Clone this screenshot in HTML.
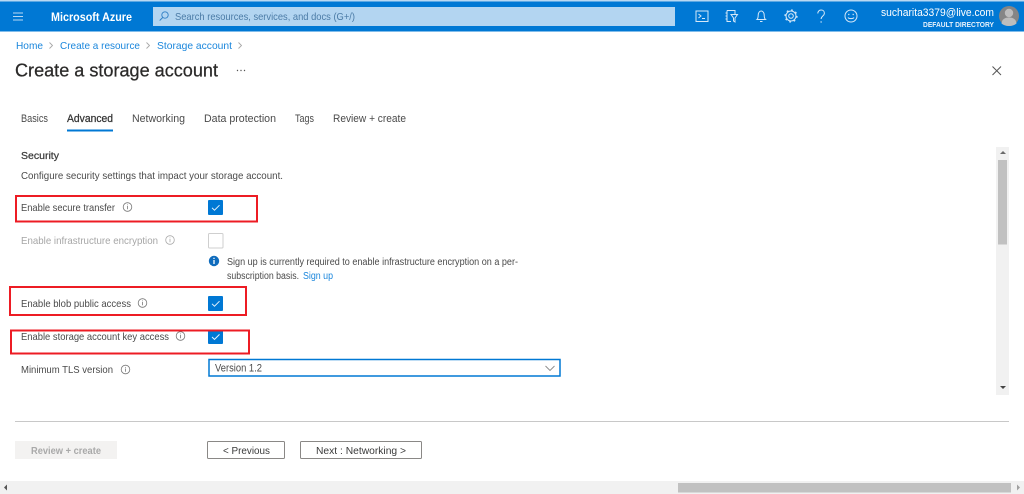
<!DOCTYPE html>
<html lang="en">
<head>
<meta charset="utf-8">
<title>Create a storage account - Microsoft Azure</title>
<style>
html,body{margin:0;padding:0;width:1024px;height:494px;overflow:hidden;background:#fff}
svg{display:block;position:absolute;left:0;top:0;filter:blur(.35px)}
text{font-family:"Liberation Sans",sans-serif;font-size:10.300px;fill:#4a4a4a}
.l{fill:#1a86dc}
.d{fill:#a6a6a6}
.info{fill:none;stroke:#777;stroke-width:.8}
.red{fill:none;stroke:#ed1c24;stroke-width:2}
.ic{fill:none;stroke:#d5e8f8;stroke-width:1}
.chev{fill:none;stroke:#a8a8a8;stroke-width:.9}
</style>
</head>
<body>
<svg width="1024" height="494" viewBox="0 0 1024 494" xmlns="http://www.w3.org/2000/svg">
<rect width="1024" height="494" fill="#fff"/>

<!-- Top bar -->
<rect x="0" y="0" width="1024" height="1.500" fill="#b9d8f2"/>
<rect x="0" y="1.500" width="1024" height="30" fill="#0078d4"/>
<path d="M13 13h10M13 16.500h10M13 20h10" stroke="#b8d8f3" stroke-width="1" fill="none"/>
<text x="51" y="21" textLength="81" lengthAdjust="spacingAndGlyphs" font-weight="bold" style="font-size:12px;fill:#fff">Microsoft Azure</text>
<rect x="153" y="7" width="522" height="19" fill="#b3d5f1"/>
<circle cx="165" cy="15" r="3.200" fill="none" stroke="#2f7fc4" stroke-width=".9"/>
<path d="M162.700 17.500l-3 3" stroke="#2f7fc4" stroke-width=".9"/>
<text x="175" y="20" textLength="180" lengthAdjust="spacingAndGlyphs" style="fill:#4b7ba6;font-size:10.500px">Search resources, services, and docs (G+/)</text>

<!-- Top bar icons -->
<rect x="696" y="11" width="12" height="10.500" class="ic"/>
<path d="M698.500 14l2.500 2-2.500 2M702 18.500h3" class="ic" stroke-width=".9"/>
<path d="M727 10.500h8v3.500M727 10.500v11h4M725.500 13h1.500M725.500 16h1.500M725.500 19h1.500" class="ic"/>
<path d="M731 14.500h6.500l-2.500 3.500v4l-1.500-1v-3z" class="ic"/>
<path d="M757 19.500c1.200-1 1.200-2.500 1.200-4.500 0-2 1.200-4 3-4s3 2 3 4c0 2 0 3.500 1.300 4.500zM760 21.500h2.500" class="ic"/>
<circle cx="791" cy="16" r="2.300" class="ic"/>
<circle cx="791" cy="16" r="5" class="ic"/>
<circle cx="791" cy="16" r="6" fill="none" stroke="#d5e8f8" stroke-width="1.200" stroke-dasharray="1.800 2.900"/>
<path d="M817.800 13.500c0-2 1.400-3.500 3.300-3.500s3.300 1.300 3.300 3.200c0 2.800-3.300 2.800-3.300 5.800" class="ic"/>
<circle cx="821.100" cy="22" r=".7" fill="#d5e8f8"/>
<circle cx="851" cy="16" r="6" class="ic"/>
<circle cx="848.800" cy="14.500" r=".7" fill="#d5e8f8"/>
<circle cx="853.200" cy="14.500" r=".7" fill="#d5e8f8"/>
<path d="M848 17.500c.8 1.500 5.200 1.500 6 0" class="ic" stroke-width=".9"/>

<text x="881" y="16" textLength="113" lengthAdjust="spacingAndGlyphs" style="fill:#fff;font-size:11px">sucharita3379@live.com</text>
<text x="923" y="27" textLength="71" lengthAdjust="spacingAndGlyphs" font-weight="bold" style="fill:#e6f1fb;font-size:7.500px">DEFAULT DIRECTORY</text>
<circle cx="1009" cy="16" r="10" fill="#858585"/>
<circle cx="1009" cy="13" r="4.200" fill="#bdbdbd"/>
<path d="M1001.500 23.500c.5-4.500 3.500-6 7.500-6s7 1.500 7.500 6c-2 1.800-4.500 2.500-7.500 2.500s-5.500-.7-7.500-2.500z" fill="#bdbdbd"/>

<!-- Breadcrumb -->
<text class="l" x="16" y="49" textLength="27" lengthAdjust="spacingAndGlyphs">Home</text>
<path d="M49.500 42.500l3 3-3 3" class="chev"/>
<text class="l" x="60" y="49" textLength="80" lengthAdjust="spacingAndGlyphs">Create a resource</text>
<path d="M146.500 42.500l3 3-3 3" class="chev"/>
<text class="l" x="157" y="49" textLength="75" lengthAdjust="spacingAndGlyphs">Storage account</text>
<path d="M238.500 42.500l3 3-3 3" class="chev"/>

<!-- Title -->
<text x="15" y="76.500" textLength="203" lengthAdjust="spacingAndGlyphs" style="font-size:18.500px;fill:#2b2a29;stroke:#2b2a29;stroke-width:.25">Create a storage account</text>
<circle cx="237.500" cy="70.500" r=".7" fill="#555"/>
<circle cx="241" cy="70.500" r=".7" fill="#555"/>
<circle cx="244.500" cy="70.500" r=".7" fill="#555"/>
<path d="M992.500 66.500l8.500 8.500M1001 66.500l-8.500 8.500" stroke="#555" stroke-width="1" fill="none"/>

<!-- Tabs -->
<text x="21" y="122" textLength="27" lengthAdjust="spacingAndGlyphs" style="font-size:11px">Basics</text>
<text x="67" y="122" textLength="46" lengthAdjust="spacingAndGlyphs" style="font-size:11px;fill:#333;stroke:#333;stroke-width:.25">Advanced</text>
<text x="132" y="122" textLength="53" lengthAdjust="spacingAndGlyphs" style="font-size:11px">Networking</text>
<text x="204" y="122" textLength="72" lengthAdjust="spacingAndGlyphs" style="font-size:11px">Data protection</text>
<text x="295" y="122" textLength="19" lengthAdjust="spacingAndGlyphs" style="font-size:11px">Tags</text>
<text x="333" y="122" textLength="73" lengthAdjust="spacingAndGlyphs" style="font-size:11px">Review + create</text>
<rect x="67" y="129.500" width="46" height="2" fill="#0078d4"/>

<!-- Security -->
<text x="21" y="159" textLength="38" lengthAdjust="spacingAndGlyphs" style="fill:#3c3c3c;stroke:#3c3c3c;stroke-width:.25">Security</text>
<text x="21" y="179" textLength="262" lengthAdjust="spacingAndGlyphs">Configure security settings that impact your storage account.</text>

<text x="21" y="211" textLength="94" lengthAdjust="spacingAndGlyphs">Enable secure transfer</text>
<g class="info"><circle cx="127.500" cy="207" r="4.300"/><path d="M127.500 206v3.200M127.500 204.500v.8"/></g>
<rect x="208" y="200" width="15" height="15" rx="1" fill="#0078d4"/>
<path d="M212 207.800l2.500 2.400 5-5" fill="none" stroke="#e8f3fc" stroke-width="1"/>

<text class="d" x="21" y="244" textLength="137" lengthAdjust="spacingAndGlyphs">Enable infrastructure encryption</text>
<g class="info" style="stroke:#aaa"><circle cx="170" cy="240" r="4.300"/><path d="M170 239v3.200M170 237.500v.8"/></g>
<rect x="208.500" y="233.500" width="14.500" height="14.500" rx="1" fill="#fff" stroke="#cfcfcf"/>

<circle cx="214" cy="261" r="5.200" fill="#0f6cbd"/>
<path d="M214 260v4M214 257.800v1.200" stroke="#fff" stroke-width="1.300" fill="none"/>
<text x="227" y="265" textLength="291" lengthAdjust="spacingAndGlyphs" style="font-size:10px">Sign up is currently required to enable infrastructure encryption on a per-</text>
<text x="227" y="279" textLength="72" lengthAdjust="spacingAndGlyphs" style="font-size:10px">subscription basis.</text>
<text class="l" x="303" y="279" textLength="30" lengthAdjust="spacingAndGlyphs" style="font-size:10px">Sign up</text>

<text x="21" y="307" textLength="110" lengthAdjust="spacingAndGlyphs">Enable blob public access</text>
<g class="info"><circle cx="142.500" cy="303" r="4.300"/><path d="M142.500 302v3.200M142.500 300.500v.8"/></g>
<rect x="208" y="296" width="15" height="15" rx="1" fill="#0078d4"/>
<path d="M212 303.800l2.500 2.400 5-5" fill="none" stroke="#e8f3fc" stroke-width="1"/>

<text x="21" y="340" textLength="148" lengthAdjust="spacingAndGlyphs">Enable storage account key access</text>
<g class="info"><circle cx="180.500" cy="336" r="4.300"/><path d="M180.500 335v3.200M180.500 333.500v.8"/></g>
<rect x="208" y="329.500" width="15" height="14.500" rx="1" fill="#0078d4"/>
<path d="M212 337l2.500 2.400 5-5" fill="none" stroke="#e8f3fc" stroke-width="1"/>

<text x="21" y="373" textLength="92" lengthAdjust="spacingAndGlyphs">Minimum TLS version</text>
<g class="info"><circle cx="125.500" cy="369.500" r="4.300"/><path d="M125.500 368.500v3.200M125.500 367v.8"/></g>
<rect x="209" y="359.500" width="351" height="16.500" fill="#fff" stroke="#0078d4" stroke-width="1.500"/>
<text x="215" y="371.500" textLength="47" lengthAdjust="spacingAndGlyphs" style="font-size:11px">Version 1.2</text>
<path d="M545.500 366l4.500 4.500 4.500-4.500" fill="none" stroke="#8a8a8a" stroke-width=".9"/>

<!-- Red annotation boxes -->
<rect x="16" y="196" width="241" height="25.500" class="red"/>
<rect x="10" y="287" width="236" height="28" class="red"/>
<rect x="11" y="330.500" width="238" height="23" class="red"/>

<!-- Vertical scrollbar -->
<rect x="996" y="147" width="13" height="248" fill="#f1f1f1"/>
<rect x="998" y="160" width="9" height="84.500" fill="#c1c1c1"/>
<path d="M1003 151l-3 3h6z" fill="#6a6a6a"/>
<path d="M1000 386h6l-3 3z" fill="#444"/>

<!-- Footer -->
<rect x="15" y="421" width="994" height="1" fill="#c8c8c8"/>
<rect x="15" y="441" width="102" height="18" fill="#f3f2f1"/>
<text x="31" y="454" textLength="70" lengthAdjust="spacingAndGlyphs" font-weight="bold" style="fill:#a9a9a9">Review + create</text>
<rect x="207.500" y="441.500" width="77" height="17" rx="1" fill="#fff" stroke="#8a8886"/>
<text x="223" y="454" textLength="47" lengthAdjust="spacingAndGlyphs" style="fill:#3a3a3a">&lt; Previous</text>
<rect x="300.500" y="441.500" width="121" height="17" rx="1" fill="#fff" stroke="#8a8886"/>
<text x="316" y="454" textLength="90" lengthAdjust="spacingAndGlyphs" style="fill:#3a3a3a">Next : Networking &gt;</text>

<!-- Horizontal scrollbar -->
<rect x="0" y="481" width="1024" height="13" fill="#f1f1f1"/>
<rect x="678" y="483" width="333" height="9.500" fill="#c1c1c1"/>
<path d="M4 487.500l3-3v6z" fill="#555"/>
<path d="M1017 484.500l3 3-3 3z" fill="#a0a0a0"/>
</svg>
</body>
</html>
